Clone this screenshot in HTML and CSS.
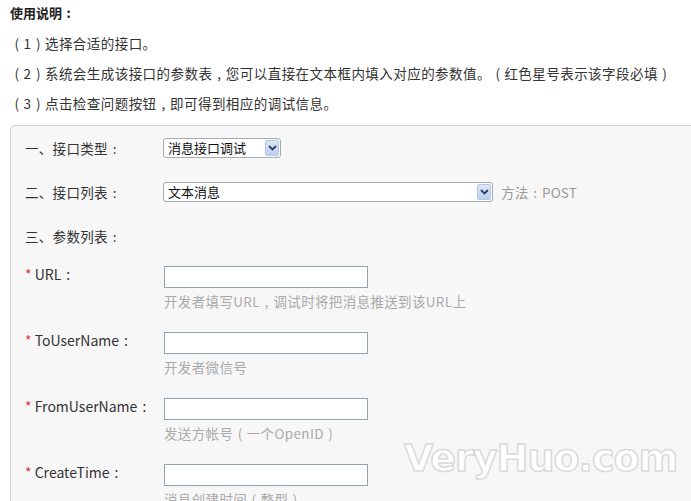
FILE: index.html
```html
<!DOCTYPE html>
<html lang="zh-CN">
<head>
<meta charset="utf-8">
<title>接口调试</title>
<link rel="stylesheet" href="styles.css">
</head>
<body>
<div class="page">
  <div class="intro-title">使用说明<span class="fw">:</span></div>
  <ul class="intro">
    <li><span class="fw">(</span>1<span class="fw">)</span>选择合适的接口。</li>
    <li><span class="fw">(</span>2<span class="fw">)</span>系统会生成该接口的参数表<span class="fw">,</span>您可以直接在文本框内填入对应的参数值。<span class="fw">(</span>红色星号表示该字段必填<span class="fw">)</span></li>
    <li><span class="fw">(</span>3<span class="fw">)</span>点击检查问题按钮<span class="fw">,</span>即可得到相应的调试信息。</li>
  </ul>
  <div class="panel">
    <div class="row">
      <div class="label">一、接口类型<span class="fw">:</span></div>
      <div class="select select-short">
        <span class="select-text">消息接口调试</span>
        <span class="arrow"><svg width="9" height="6" viewBox="0 0 9 6"><path d="M1 1 L4.5 4.5 L8 1" fill="none" stroke="#2c3e66" stroke-width="1.8"/></svg></span>
      </div>
    </div>
    <div class="row">
      <div class="label">二、接口列表<span class="fw">:</span></div>
      <div class="select select-long">
        <span class="select-text">文本消息</span>
        <span class="arrow"><svg width="9" height="6" viewBox="0 0 9 6"><path d="M1 1 L4.5 4.5 L8 1" fill="none" stroke="#2c3e66" stroke-width="1.8"/></svg></span>
      </div>
      <span class="method">方法<span class="fw">:</span>POST</span>
    </div>
    <div class="row row-title">
      <div class="label">三、参数列表<span class="fw">:</span></div>
    </div>
    <div class="field">
      <div class="flabel"><span class="star">*</span> URL<span class="fw">:</span></div>
      <div class="fbody">
        <div class="input"></div>
        <div class="hint">开发者填写URL<span class="fw">,</span>调试时将把消息推送到该URL上</div>
      </div>
    </div>
    <div class="field">
      <div class="flabel"><span class="star">*</span> ToUserName<span class="fw">:</span></div>
      <div class="fbody">
        <div class="input"></div>
        <div class="hint">开发者微信号</div>
      </div>
    </div>
    <div class="field">
      <div class="flabel"><span class="star">*</span> FromUserName<span class="fw">:</span></div>
      <div class="fbody">
        <div class="input"></div>
        <div class="hint">发送方帐号<span class="fw">(</span>一个OpenID<span class="fw">)</span></div>
      </div>
    </div>
    <div class="field">
      <div class="flabel"><span class="star">*</span> CreateTime<span class="fw">:</span></div>
      <div class="fbody">
        <div class="input"></div>
        <div class="hint">消息创建时间<span class="fw">(</span>整型<span class="fw">)</span></div>
      </div>
    </div>
  </div>
</div>
<div class="watermark">VeryHuo.com</div>
</body>
</html>
```
FILE: styles.css
```css
html, body {
  margin: 0;
  padding: 0;
  overflow: hidden;
  background: #fff;
}
body {
  font-family: "Noto Sans CJK SC", "Noto Sans", sans-serif;
  font-size: 13.5px;
  color: #333;
  width: 691px;
  height: 501px;
  position: relative;
}
.fw {
  display: inline-block;
  width: 1em;
  text-align: center;
  letter-spacing: 0;
}
.page {
  padding-left: 10px;
}
.intro-title {
  font-weight: bold;
  font-size: 13px;
  line-height: 26px;
  color: #222;
}
.intro {
  list-style: none;
  margin: 2px 0 7px 0;
  padding: 0;
}
.intro li {
  line-height: 30px;
  white-space: nowrap;
  letter-spacing: 0.45px;
}
.panel {
  background: #f7f7f7;
  border: 1px solid #cfcfcf;
  border-right: none;
  border-bottom: none;
  border-top-left-radius: 5px;
  padding: 12px 0 0 14px;
  height: 400px;
}
.row {
  display: flex;
  align-items: center;
  height: 20px;
  margin-bottom: 24px;
}
.row-title {
  margin-bottom: 20px;
}
.label {
  width: 138px;
  line-height: 20px;
  letter-spacing: 0.3px;
}
.select {
  box-sizing: border-box;
  height: 20px;
  background: #fff;
  border: 1px solid #a3abb5;
  border-radius: 3px;
  display: flex;
  align-items: center;
  justify-content: space-between;
  padding-left: 4px;
  padding-right: 1px;
  color: #111;
  font-size: 13px;
}
.select-short { width: 118px; }
.select-long { width: 330px; }
.select-text {
  line-height: 18px;
}
.arrow {
  width: 14px;
  height: 16px;
  box-sizing: border-box;
  border: 1px solid #b6c8e6;
  border-radius: 2px;
  background: linear-gradient(#dbe6f8, #bccff0);
  display: flex;
  align-items: center;
  justify-content: center;
}
.method {
  margin-left: 8px;
  color: #999;
  letter-spacing: 0.2px;
}
.field {
  display: flex;
  align-items: flex-start;
  margin-bottom: 22px;
}
.flabel {
  width: 139px;
  line-height: 18px;
  margin-top: -1px;
  font-size: 14px;
}
.star {
  color: #d9363e;
}
.input {
  box-sizing: border-box;
  width: 204px;
  height: 22px;
  background: #fff;
  border: 1px solid #91a2b3;
}
.hint {
  margin-top: 4px;
  line-height: 18px;
  color: #aaa;
  white-space: nowrap;
  letter-spacing: 0.35px;
}
.watermark {
  position: absolute;
  left: 404px;
  top: 436px;
  font-family: "DejaVu Sans", sans-serif;
  font-weight: bold;
  font-size: 38px;
  letter-spacing: -1px;
  color: #fff;
  -webkit-text-stroke: 1.5px #dadada;
}
```
